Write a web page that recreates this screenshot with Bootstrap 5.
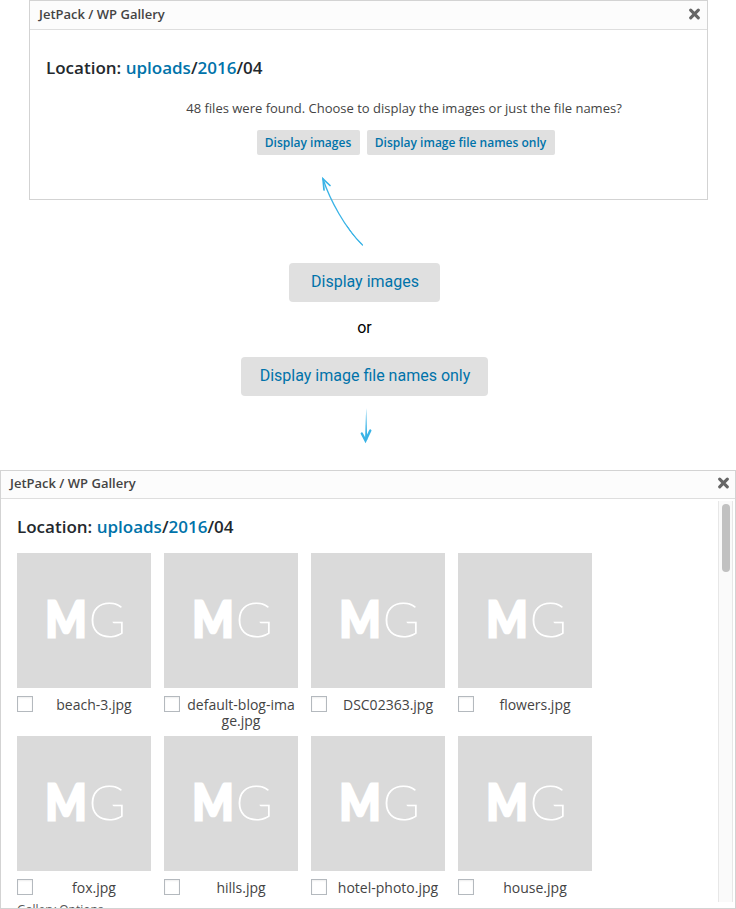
<!DOCTYPE html>
<html lang="en">
<head>
<meta charset="utf-8">
<meta name="viewport" content="width=device-width, initial-scale=1">
<title>JetPack / WP Gallery</title>
<link href="https://cdn.jsdelivr.net/npm/bootstrap@5.3.0/dist/css/bootstrap.min.css" rel="stylesheet">
<style>
body{font-family:"Open Sans",sans-serif;color:#444;background:#fff;height:909px;overflow:hidden;line-height:1.2}
.panel{border:1px solid #d3d3d3;background:#fff}
.panel-first{width:679px;height:200px;margin-left:29px}
.panel-second{height:439px;margin-top:26px}
.panel-title{height:29px;padding:0 7px 0 9px;background:#fcfcfc;border-bottom:1px solid #dedede;font-size:13px;font-weight:600;color:#444}
.panel-second .panel-title{height:28px;padding-right:6px}
.panel-second .panel-title span{margin-top:-2px}
.panel-title button{width:12px;height:12px;margin-top:-2px}
.panel-second .panel-title button{margin-top:-3px}
.place{font-size:17px;font-weight:600;line-height:22px;color:#23282d}
.place a{color:#0073aa;text-decoration:none}
.panel-first .place{margin:27px 0 0 16px}
.panel-second .place{margin:17px 0 15px 16px}
.found{margin:20px 0 0 71px;font-size:13px;line-height:18px}
.choices{margin:13px 0 0 74px;gap:7px}
.btn-pick{--bs-btn-color:#0073aa;--bs-btn-bg:#e0e0e0;--bs-btn-border-width:0;--bs-btn-hover-bg:#d6d6d6;--bs-btn-hover-color:#0073aa;--bs-btn-padding-x:0;--bs-btn-padding-y:0}
.choices .btn-pick{height:25px;font-size:12px;font-weight:600;line-height:25px;border-radius:2px}
.w-a{width:103px}.w-b{width:188px}
.steps{font-family:Roboto,sans-serif;font-size:16px;color:#000;padding-top:63px;margin-right:7px}
.steps .btn-pick{height:39px;font-family:Roboto,sans-serif;font-size:16px;line-height:37px;padding:0 0 2px 1px;border-radius:4px}
.w-c{width:151px}.w-d{width:247px}
.or-word{height:55px;line-height:52px}
.arrow-up{left:315px;top:172px}
.arrow-down{margin:10px 0 0 2px}
.tiles{display:grid;grid-template-columns:repeat(4,134px);column-gap:13px;margin-left:16px}
.tile{height:183px}
.thumb{width:134px;height:135px;background:#dadada}
.thumb svg{display:block}
.tile .form-check-input{width:16px;height:16px;margin:8px 0 0;border:1px solid #b4b9be;border-radius:0;flex:none;box-shadow:inset 0 1px 2px rgba(0,0,0,.07);float:none}
.file-name{width:110px;margin:9px -2px 0 6px;font-size:14px;line-height:16px;text-align:center;word-break:break-all}
.options{margin:-17px 0 0 16px;font-size:12px;line-height:16px;color:#555}
.track{width:15px;height:401px;margin:2px 2px 0 0;padding:3px 0 0 3px;background:#fafafa;border:solid #e7e7e7;border-width:0 1px}
.thumb-bar{width:8px;height:68px;border-radius:4px;background:#c1c1c1}
</style>
<script src="https://cdn.jsdelivr.net/npm/bootstrap@5.3.0/dist/js/bootstrap.bundle.min.js"></script>
</head>
<body>
<svg class="d-none" aria-hidden="true">
  <symbol id="cross" viewBox="0 0 12 12"><path d="M2.700 2.200 10.300 9.800M10.300 2.200 2.700 9.800" stroke="#666" stroke-width="3.100" stroke-linecap="round" fill="none"/></symbol>
  <symbol id="mg" viewBox="0 0 134 135">
    <g fill="#fff" stroke="#fff" font-family="Lato,sans-serif" font-size="48.500">
      <text x="28.500" y="84" font-weight="900" stroke-width="2.800" textLength="41" lengthAdjust="spacingAndGlyphs">M</text>
      <text x="71.700" y="84.300" font-weight="200" stroke-width="1.100" textLength="37" lengthAdjust="spacingAndGlyphs">G</text>
    </g>
  </symbol>
</svg>

<section class="panel panel-first">
  <header class="panel-title d-flex align-items-center justify-content-between"><span>JetPack / WP Gallery</span>
    <button class="btn p-0 border-0 d-flex" aria-label="Close"><svg width="12" height="12"><use href="#cross"/></svg></button></header>
  <h2 class="place">Location: <a href="#">uploads</a>/<a href="#">2016</a>/04</h2>
  <p class="found text-center">48 files were found. Choose to display the images or just the file names?</p>
  <div class="choices d-flex justify-content-center"><button class="btn btn-pick w-a">Display images</button><button class="btn btn-pick w-b">Display image file names only</button></div>
</section>

<svg class="arrow-up position-absolute" width="55" height="80" viewBox="0 0 55 80" fill="none" stroke="#39b3e6" stroke-linecap="round">
  <path d="M8 7C15 28 30 56 47.500 73" stroke-width="1.300"/><path d="M32 54Q38 64 46 71.500" stroke-width="1"/><path d="M9 18 8 7 15 13.500" stroke-width="1.700"/>
</svg>

<div class="steps d-flex flex-column align-items-center">
  <button class="btn btn-pick w-c">Display images</button>
  <div class="or-word">or</div>
  <button class="btn btn-pick w-d">Display image file names only</button>
  <svg class="arrow-down" width="14" height="38" viewBox="0 0 14 38"><path d="M7.200 2 8.200 34H6Z" fill="#39b3e6"/><path d="M2.800 27.500 6.500 34.500 11.300 24.500" fill="none" stroke="#39b3e6" stroke-width="2.400" stroke-linecap="round"/></svg>
</div>

<section class="panel panel-second overflow-hidden">
  <header class="panel-title d-flex align-items-center justify-content-between"><span>JetPack / WP Gallery</span>
    <button class="btn p-0 border-0 d-flex" aria-label="Close"><svg width="12" height="12"><use href="#cross"/></svg></button></header>
  <div class="d-flex justify-content-between align-items-start">
    <div>
      <h2 class="place">Location: <a href="#">uploads</a>/<a href="#">2016</a>/04</h2>
      <div class="tiles">
        <div class="tile"><div class="thumb"><svg width="134" height="135"><use href="#mg"/></svg></div><label class="d-flex"><input class="form-check-input" type="checkbox"><span class="file-name">beach-3.jpg</span></label></div>
        <div class="tile"><div class="thumb"><svg width="134" height="135"><use href="#mg"/></svg></div><label class="d-flex"><input class="form-check-input" type="checkbox"><span class="file-name">default-blog-image.jpg</span></label></div>
        <div class="tile"><div class="thumb"><svg width="134" height="135"><use href="#mg"/></svg></div><label class="d-flex"><input class="form-check-input" type="checkbox"><span class="file-name">DSC02363.jpg</span></label></div>
        <div class="tile"><div class="thumb"><svg width="134" height="135"><use href="#mg"/></svg></div><label class="d-flex"><input class="form-check-input" type="checkbox"><span class="file-name">flowers.jpg</span></label></div>
        <div class="tile"><div class="thumb"><svg width="134" height="135"><use href="#mg"/></svg></div><label class="d-flex"><input class="form-check-input" type="checkbox"><span class="file-name">fox.jpg</span></label></div>
        <div class="tile"><div class="thumb"><svg width="134" height="135"><use href="#mg"/></svg></div><label class="d-flex"><input class="form-check-input" type="checkbox"><span class="file-name">hills.jpg</span></label></div>
        <div class="tile"><div class="thumb"><svg width="134" height="135"><use href="#mg"/></svg></div><label class="d-flex"><input class="form-check-input" type="checkbox"><span class="file-name">hotel-photo.jpg</span></label></div>
        <div class="tile"><div class="thumb"><svg width="134" height="135"><use href="#mg"/></svg></div><label class="d-flex"><input class="form-check-input" type="checkbox"><span class="file-name">house.jpg</span></label></div>
      </div>
      <div class="options">Gallery Options</div>
    </div>
    <div class="track"><div class="thumb-bar"></div></div>
  </div>
</section>
</body>
</html>
